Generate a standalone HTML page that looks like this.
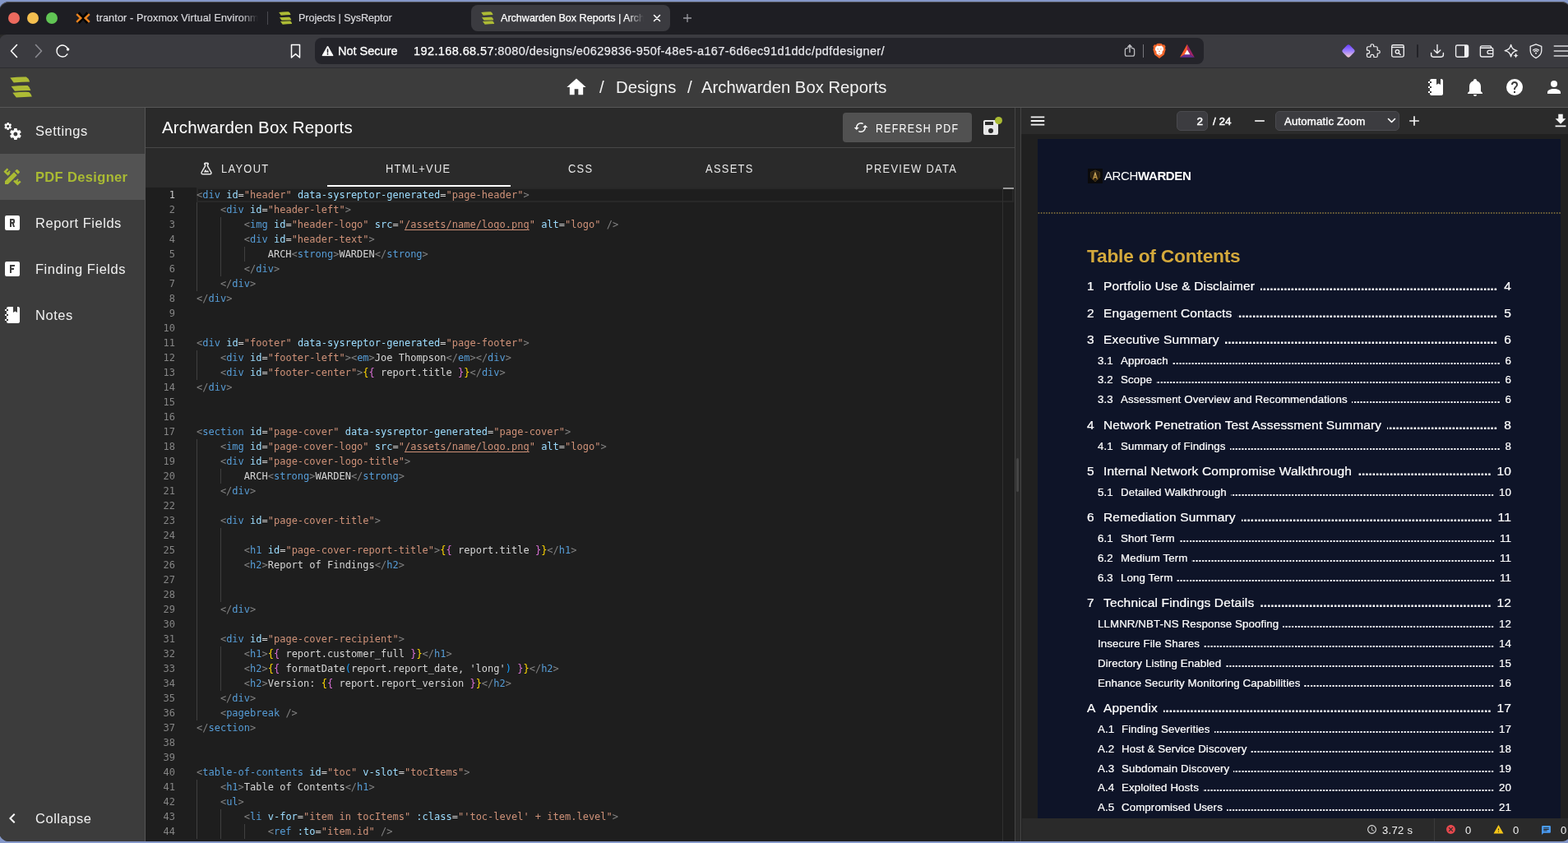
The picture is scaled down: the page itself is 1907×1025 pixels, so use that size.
<!DOCTYPE html>
<html lang="en"><head><meta charset="utf-8"><title>Archwarden Box Reports | SysReptor</title>
<style>
*{box-sizing:border-box;margin:0;padding:0}
html,body{width:1907px;height:1025px;overflow:hidden;background:#8497c8;font-family:"Liberation Sans",sans-serif;color:#fff}
.a{position:absolute}
#win{position:absolute;left:-1px;top:2px;width:1912px;height:1021px;border-radius:12px;overflow:hidden;background:#2a2a2a}
#hl{position:absolute;left:-1px;top:2px;width:1912px;height:1021px;border-radius:12px;box-shadow:inset 0 1px 0 rgba(255,255,255,.22);pointer-events:none}
#w{position:absolute;left:1px;top:-2px;width:1907px;height:1025px;will-change:transform}
.tx{position:absolute;white-space:nowrap}
.ui{font-family:"Liberation Sans",sans-serif}
.code{font-family:"DejaVu Sans Mono","Liberation Mono",monospace;font-size:12px}
.ln{position:absolute;left:177px;width:36px;text-align:right;height:18px;line-height:18px;color:#858585;font-family:"DejaVu Sans Mono","Liberation Mono",monospace;font-size:12px}
.ln.act{color:#c6c6c6}
.cl{position:absolute;height:18px;line-height:18px;white-space:pre;font-family:"DejaVu Sans Mono","Liberation Mono",monospace;font-size:12px;color:#d4d4d4}
.ig{position:absolute;width:1px;height:18px;background:#404040}
.d{color:#808080}.g{color:#569cd6}.n{color:#9cdcfe}.v{color:#ce9178}.t{color:#d4d4d4}.y{color:#ffd700}.m{color:#da70d6}.b{color:#179fff}
.v u{text-decoration:underline;text-underline-offset:2px}
.toc{position:absolute;display:flex;white-space:nowrap;color:#fff;overflow:hidden;-webkit-text-stroke:.22px #fff}
.toc .num{flex:none;display:inline-block}
.toc .tt{flex:none}
.toc .dots{flex:1 1 0;overflow:hidden;direction:rtl;text-align:right;min-width:0}
.toc .pg{flex:none;text-align:right}
.t1{font-size:15.5px;letter-spacing:.16px}
.t1 .dots{margin-left:7px;margin-right:7px;letter-spacing:-.05px;font-weight:bold}
.t1 .pg{min-width:10px}
.t2{font-size:13.3px;letter-spacing:.1px}
.t2 .dots{margin-left:5px;margin-right:6px;color:#f0f0f4;font-weight:bold}
.sb{position:absolute;left:43px;font-size:16.5px;letter-spacing:.52px;color:#f0f0f0;white-space:nowrap;height:56px;line-height:56px}
.tab{position:absolute;top:181px;height:48px;line-height:49px;font-size:14px;letter-spacing:1.42px;color:#e6e6e6;white-space:nowrap;transform-origin:0 50%;transform:scaleX(.92)}
</style></head>
<body>
<div id="win"><div id="w">
<!-- browser tab strip -->
<div class="a" style="left:0;top:0;width:1907px;height:42px;background:#1e1e23"></div>
<div class="a" style="left:10px;top:14.5px;width:14px;height:14px;border-radius:50%;background:#ec6a5e"></div>
<div class="a" style="left:33px;top:14.5px;width:14px;height:14px;border-radius:50%;background:#f4bf4f"></div>
<div class="a" style="left:56px;top:14.5px;width:14px;height:14px;border-radius:50%;background:#61c554"></div>
<svg class="a" style="left:91px;top:13px" width="20" height="18" viewBox="0 0 20 18"><path d="M4.6 2.6 L15.4 15 M15.4 2.6 L4.6 15" stroke="#000" stroke-width="3" fill="none"/><path d="M2.2 4.2 L7.3 9 L2.2 13.8 M17.8 4.2 L12.7 9 L17.8 13.8" stroke="#e8821e" stroke-width="2.5" fill="none" stroke-linejoin="miter"/></svg>
<div class="tx" style="left:117px;top:14px;letter-spacing:.14px;font-size:12.6px;color:#d8d8dc;-webkit-text-stroke:.2px #d8d8dc;line-height:16px;width:197px;overflow:hidden;-webkit-mask-image:linear-gradient(90deg,#000 89%,transparent 100%)">trantor - Proxmox Virtual Environment</div>
<div class="a" style="left:325px;top:14px;width:1px;height:16px;background:#4a4a50"></div>
<svg class="a" style="left:338.8px;top:14.4px" width="16.4" height="15.8" viewBox="11.5 93.4 27.2 25.8" preserveAspectRatio="none"><g fill="#adbb35"><path d="M11.8 95 Q22 93.6 31.4 93.9 Q34.6 95.6 35.7 99.9 Q26 100 16.2 101Z"/><path d="M13.1 105.3 Q23 104.2 33.2 104.4 Q36 106.2 36.9 110.5 Q27 110.3 17.5 111.15Z"/><path d="M14.8 113.2 Q25 112 34.6 112.3 Q37.4 113.8 38.4 117.8 Q29 118 19.3 119Z"/></g></svg>
<div class="tx" style="left:363px;top:14px;letter-spacing:-.05px;font-size:12.6px;color:#d8d8dc;-webkit-text-stroke:.2px #d8d8dc;line-height:16px">Projects | SysReptor</div>
<div class="a" style="left:573px;top:6px;width:242px;height:32px;border-radius:8px;background:#3b3b40"></div>
<svg class="a" style="left:584.8px;top:14.4px" width="16.4" height="15.8" viewBox="11.5 93.4 27.2 25.8" preserveAspectRatio="none"><g fill="#adbb35"><path d="M11.8 95 Q22 93.6 31.4 93.9 Q34.6 95.6 35.7 99.9 Q26 100 16.2 101Z"/><path d="M13.1 105.3 Q23 104.2 33.2 104.4 Q36 106.2 36.9 110.5 Q27 110.3 17.5 111.15Z"/><path d="M14.8 113.2 Q25 112 34.6 112.3 Q37.4 113.8 38.4 117.8 Q29 118 19.3 119Z"/></g></svg>
<div class="tx" style="left:609px;top:14px;letter-spacing:-.02px;font-size:12.6px;color:#fff;-webkit-text-stroke:.25px #fff;line-height:16px;width:174px;overflow:hidden;-webkit-mask-image:linear-gradient(90deg,#000 88%,transparent 100%)">Archwarden Box Reports | Archwarden</div>
<svg class="a" style="left:794px;top:17px" width="10" height="10" viewBox="0 0 10 10"><path d="M1.5 1.5 L8.5 8.5 M8.5 1.5 L1.5 8.5" stroke="#fff" stroke-width="1.5" stroke-linecap="round"/></svg>
<svg class="a" style="left:830px;top:16px" width="12" height="12" viewBox="0 0 12 12"><path d="M6 1 V11 M1 6 H11" stroke="#9a9aa0" stroke-width="1.3"/></svg>
<!-- toolbar -->
<div class="a" style="left:-1px;top:42px;width:1915px;height:41px;background:#3b3b40;border-radius:9px 9px 0 0"></div>
<div class="a" style="left:0;top:82px;width:1907px;height:1px;background:#2c2c30"></div>
<svg class="a" style="left:11px;top:53px" width="12" height="18" viewBox="0 0 12 18"><path d="M9.5 1.5 L2.5 9 L9.5 16.5" fill="none" stroke="#fff" stroke-width="1.6" stroke-linecap="round" stroke-linejoin="round"/></svg>
<svg class="a" style="left:41px;top:53px" width="12" height="18" viewBox="0 0 12 18"><path d="M2.5 1.5 L9.5 9 L2.5 16.5" fill="none" stroke="#8a8a90" stroke-width="1.6" stroke-linecap="round" stroke-linejoin="round"/></svg>
<svg class="a" style="left:66.4px;top:51.8px" width="20" height="20" viewBox="0 0 20 20"><path d="M15.87 13.81 A7 7 0 1 1 16.76 8.19" fill="none" stroke="#fff" stroke-width="1.4" stroke-linecap="round"/><circle cx="16.6" cy="8.1" r="1.75" fill="#fff"/></svg>
<svg class="a" style="left:352px;top:53px" width="15" height="19" viewBox="0 0 15 19"><path d="M2.5 1.5 H12.5 V17 L7.5 12.6 L2.5 17Z" fill="none" stroke="#fff" stroke-width="1.5" stroke-linejoin="round"/></svg>
<div class="a" style="left:383px;top:46px;width:1081px;height:32px;border-radius:8px;background:#24242a"></div>
<svg class="a" style="left:391px;top:55px" width="15" height="14" viewBox="0 0 15 14"><path d="M7.5 1 L14 12.6 H1Z" fill="#fff" stroke="#fff" stroke-width="1" stroke-linejoin="round"/><path d="M7.5 5 V8.6" stroke="#24242a" stroke-width="1.6" stroke-linecap="round"/><circle cx="7.5" cy="10.8" r=".95" fill="#24242a"/></svg>
<div class="tx" style="left:411px;top:53px;font-size:14.5px;color:#fff;-webkit-text-stroke:.3px #fff;line-height:18px">Not Secure</div>
<div class="tx" style="left:503px;top:53px;font-size:14.5px;color:#fff;-webkit-text-stroke:.25px #fff;line-height:18px;letter-spacing:.4px">192.168.68.57<span style="color:#e6e6ea;-webkit-text-stroke:.25px #e6e6ea">:8080/designs/e0629836-950f-48e5-a167-6d6ec91d1ddc/pdfdesigner/</span></div>
<!-- url right icons -->
<svg class="a" style="left:1366px;top:52px" width="16" height="19" viewBox="0 0 16 19"><path d="M5.6 6.6 H4.6 A2.2 2.2 0 0 0 2.4 8.8 V14 A2.2 2.2 0 0 0 4.6 16.2 H11.4 A2.2 2.2 0 0 0 13.6 14 V8.8 A2.2 2.2 0 0 0 11.4 6.6 H10.4" fill="none" stroke="#bcbcc0" stroke-width="1.3" stroke-linecap="round"/><path d="M8 11.6 V4" stroke="#bcbcc0" stroke-width="1.4" stroke-linecap="round"/><path d="M5.2 5.2 L8 2 L10.8 5.2Z" fill="#bcbcc0" stroke="#bcbcc0" stroke-width=".8" stroke-linejoin="round"/></svg>
<div class="a" style="left:1390px;top:54px;width:1px;height:16px;background:#77777c"></div>
<svg class="a" style="left:1401px;top:52px" width="18" height="20" viewBox="0 0 18 20"><path d="M9 0.8 L11.8 1 L13 2.4 L15 2.2 L16.6 4.6 L16 6.2 L16.6 8.2 L14.8 14.4 L9 19 L3.2 14.4 L1.4 8.2 L2 6.2 L1.4 4.6 L3 2.2 L5 2.4 L6.2 1Z" fill="#f1652b"/><path d="M9 4 L11.6 3.6 L13.8 5.8 L14.2 8.6 L12.4 11 L12.6 13 L9 15.6 L5.4 13 L5.6 11 L3.8 8.600000000000001 L4.2 5.8 L6.4 3.6Z" fill="#fff"/><path d="M6 7 L8 7.6 L7.4 8.6Z M12 7 L10 7.6 L10.6 8.6Z M8.2 10.8 L9 9.2 L9.8 10.8 L9 11.6Z M7.4 12.6 L9 13.4 L10.6 12.6 L9 14.4Z" fill="#f1652b"/></svg>
<svg class="a" style="left:1433px;top:52px" width="22" height="20" viewBox="0 0 22 20"><path d="M10.9 1.8 L2 17.8 L10.9 12.5Z" fill="#ff5a2c"/><path d="M10.9 1.8 L19.8 17.8 L10.9 12.5Z" fill="#a0246a"/><path d="M2 17.8 H19.8 L10.9 12.5Z" fill="#662d91"/><path d="M10.9 8.6 L14.3 14.3 H7.5Z" fill="#fff"/></svg>
<!-- toolbar right icons -->
<svg class="a" style="left:1630px;top:52px" width="20" height="20" viewBox="0 0 20 20"><defs><linearGradient id="gd" x1="0" y1="0" x2="1" y2="1"><stop offset="0" stop-color="#6236ff"/><stop offset=".5" stop-color="#9d80ff"/><stop offset="1" stop-color="#ffd6c4"/></linearGradient></defs><rect x="3.9" y="3.9" width="12.2" height="12.2" rx="2.8" fill="url(#gd)" transform="rotate(45 10 10)"/></svg>
<svg class="a" style="left:1660px;top:52px" width="20" height="20" viewBox="0 0 24 24"><path d="M20.5,11H19V7C19,5.89 18.1,5 17,5H13V3.5A2.5,2.5 0 0,0 10.5,1A2.5,2.5 0 0,0 8,3.5V5H4A2,2 0 0,0 2,7V10.8H3.5C5,10.8 6.2,12 6.2,13.5C6.2,15 5,16.2 3.5,16.2H2V20A2,2 0 0,0 4,22H7.8V20.5C7.8,19 9,17.8 10.5,17.8C12,17.8 13.2,19 13.2,20.5V22H17A2,2 0 0,0 19,20V16H20.5A2.5,2.5 0 0,0 23,13.5A2.5,2.5 0 0,0 20.5,11Z" fill="none" stroke="#f0f0f2" stroke-width="1.65" stroke-linejoin="round" transform="translate(1.2 1.2) scale(.9)"/></svg>
<svg class="a" style="left:1690px;top:53px" width="20" height="18" viewBox="0 0 20 18"><rect x="2.7" y="1.7" width="14.6" height="14.4" rx="1.8" fill="none" stroke="#f0f0f2" stroke-width="1.35"/><path d="M2.7 4.5 H17.3" stroke="#f0f0f2" stroke-width="1.3"/><circle cx="9.4" cy="9.8" r="2.2" fill="none" stroke="#f0f0f2" stroke-width="1.35"/><path d="M11.1 11.5 L13.2 13.5" stroke="#f0f0f2" stroke-width="1.4" stroke-linecap="round"/></svg>
<div class="a" style="left:1723px;top:54px;width:2px;height:16px;background:#222227;border-radius:1px"></div>
<svg class="a" style="left:1738px;top:52px" width="20" height="20" viewBox="0 0 20 20"><path d="M10 2.4 V12.6 M6.2 9 L10 12.8 L13.8 9 M2.6 12.4 V14.6 A2.6 2.6 0 0 0 5.2 17.2 H14.8 A2.6 2.6 0 0 0 17.4 14.6 V12.4" fill="none" stroke="#f0f0f2" stroke-width="1.4" stroke-linecap="round" stroke-linejoin="round"/></svg>
<svg class="a" style="left:1768px;top:53px" width="20" height="18" viewBox="0 0 20 18"><rect x="2.6" y="2" width="15" height="14.2" rx="1.8" fill="none" stroke="#f0f0f2" stroke-width="1.35"/><path d="M13 2 H15.8 A1.8 1.8 0 0 1 17.6 3.8 V14.4 A1.8 1.8 0 0 1 15.8 16.2 H13Z" fill="#f0f0f2"/></svg>
<svg class="a" style="left:1798px;top:53px" width="20" height="18" viewBox="0 0 20 18"><path d="M15.6 5.2 V4.4 A1.6 1.6 0 0 0 14 2.8 H4.4 A2 2 0 0 0 2.4 4.8 V14 A2 2 0 0 0 4.4 16 H16 A1.8 1.8 0 0 0 17.800000000000001 14.2 V7 A1.8 1.8 0 0 0 16 5.2 H3.6" fill="none" stroke="#f0f0f2" stroke-width="1.35" stroke-linejoin="round" stroke-linecap="round"/><path d="M17.8 8.4 H13 A2 2 0 0 0 13 12.4 H17.8" fill="none" stroke="#f0f0f2" stroke-width="1.35"/></svg>
<svg class="a" style="left:1828px;top:52px" width="22" height="20" viewBox="0 0 22 20"><path d="M9.6 2.4 Q10.6 8.4 17 9.6 Q10.6 10.8 9.6 16.8 Q8.6 10.8 2.2 9.6 Q8.6 8.4 9.6 2.4Z" fill="none" stroke="#f0f0f2" stroke-width="1.4" stroke-linejoin="round"/><path d="M15.6 12.6 Q16 15.2 18.6 15.6 Q16 16 15.6 18.6 Q15.2 16 12.6 15.6 Q15.2 15.2 15.6 12.6Z" fill="#f0f0f2"/></svg>
<svg class="a" style="left:1858px;top:52px" width="20" height="20" viewBox="0 0 20 20"><path d="M10 1.8 L16.8 4.3 V9.6 C16.8 14 13.8 16.8 10 18.6 C6.2 16.8 3.2 14 3.2 9.6 V4.3Z" fill="none" stroke="#f0f0f2" stroke-width="1.3" stroke-linejoin="round"/><path d="M6.6 9 A4.8 4.8 0 0 1 13.4 9 M7.9 10.7 A3 3 0 0 1 12.1 10.7" fill="none" stroke="#f0f0f2" stroke-width="1.2" stroke-linecap="round"/><circle cx="10" cy="12.7" r="1" fill="#f0f0f2"/></svg>
<svg class="a" style="left:1888px;top:54px" width="19" height="16" viewBox="0 0 19 16"><path d="M2.2 2 H19 M2.2 8 H19 M2.2 14 H19" stroke="#d8d8da" stroke-width="1.3" stroke-linecap="round"/></svg>

<!-- app bar -->
<div class="a" style="left:0;top:83px;width:1907px;height:47px;background:#3c3c3c"></div>
<div class="a" style="left:0;top:130px;width:1907px;height:1px;background:#575757"></div>
<svg class="a" style="left:11.5px;top:93.4px" width="27.2" height="25.8" viewBox="11.5 93.4 27.2 25.8" preserveAspectRatio="none"><g fill="#adbb35"><path d="M11.8 95 Q22 93.6 31.4 93.9 Q34.6 95.6 35.7 99.9 Q26 100 16.2 101Z"/><path d="M13.1 105.3 Q23 104.2 33.2 104.4 Q36 106.2 36.9 110.5 Q27 110.3 17.5 111.15Z"/><path d="M14.8 113.2 Q25 112 34.6 112.3 Q37.4 113.8 38.4 117.8 Q29 118 19.3 119Z"/></g></svg>
<svg class="a" style="left:687px;top:92px;" width="28" height="28" viewBox="0 0 24 24"><path fill="#fff" d="M10,20V14H14V20H19V12H22L12,3L2,12H5V20H10Z"/></svg>
<div class="tx" style="left:729px;top:93px;font-size:20.5px;line-height:26px;color:#f2f2f2;letter-spacing:.1px">/</div>
<div class="tx" style="left:749px;top:93px;font-size:20.3px;line-height:26px;color:#f2f2f2;letter-spacing:0">Designs</div>
<div class="tx" style="left:836px;top:93px;font-size:20.5px;line-height:26px;color:#f2f2f2">/</div>
<div class="tx" style="left:853px;top:93px;font-size:20.3px;line-height:26px;color:#f2f2f2;letter-spacing:0">Archwarden Box Reports</div>
<svg class="a" style="left:1734px;top:94px;" width="24" height="24" viewBox="0 0 24 24"><path fill="#fff" d="M3,7V5H5V4C5,2.89 5.9,2 7,2H13V9L15.5,7.5L18,9V2H19C20.05,2 21,2.95 21,4V20C21,21.05 20.05,22 19,22H7C5.95,22 5,21.05 5,20V19H3V17H5V13H3V11H5V7H3M7,11H5V13H7V11M7,7V5H5V7H7M7,19V17H5V19H7Z"/></svg>
<svg class="a" style="left:1782px;top:94px;" width="24" height="24" viewBox="0 0 24 24"><path fill="#fff" d="M21,19V20H3V19L5,17V11C5,7.9 7.03,5.17 10,4.29C10,4.19 10,4.1 10,4A2,2 0 0,1 12,2A2,2 0 0,1 14,4C14,4.1 14,4.19 14,4.29C16.97,5.17 19,7.9 19,11V17L21,19M14,21A2,2 0 0,1 12,23A2,2 0 0,1 10,21"/></svg>
<svg class="a" style="left:1830px;top:94px;" width="24" height="24" viewBox="0 0 24 24"><path fill="#fff" d="M15.07,11.25L14.17,12.17C13.45,12.89 13,13.5 13,15H11V14.5C11,13.39 11.45,12.39 12.17,11.67L13.41,10.41C13.78,10.05 14,9.55 14,9C14,7.89 13.1,7 12,7A2,2 0 0,0 10,9H8A4,4 0 0,1 12,5A4,4 0 0,1 16,9C16,9.88 15.64,10.67 15.07,11.25M13,19H11V17H13M12,2A10,10 0 0,0 2,12A10,10 0 0,0 12,22A10,10 0 0,0 22,12C22,6.47 17.5,2 12,2Z"/></svg>
<svg class="a" style="left:1878px;top:94px;" width="24" height="24" viewBox="0 0 24 24"><path fill="#fff" d="M12,4A4,4 0 0,1 16,8A4,4 0 0,1 12,12A4,4 0 0,1 8,8A4,4 0 0,1 12,4M12,14C16.42,14 20,15.79 20,18V20H4V18C4,15.79 7.58,14 12,14Z"/></svg>

<!-- sidebar -->
<div class="a" style="left:0;top:131px;width:176px;height:894px;background:#3c3c3c"></div>
<div class="a" style="left:176px;top:131px;width:1px;height:894px;background:#555"></div>
<div class="a" style="left:0;top:187px;width:176px;height:56px;background:#535353"></div>
<svg class="a" style="left:3px;top:147px;" width="24" height="24" viewBox="0 0 24 24"><path fill="#fff" d="M15.9,18.45C17.25,18.45 18.35,17.35 18.35,16C18.35,14.65 17.25,13.55 15.9,13.55C14.54,13.55 13.45,14.65 13.45,16C13.45,17.35 14.54,18.45 15.9,18.45M21.1,16.68L22.58,17.84C22.71,17.95 22.75,18.13 22.66,18.29L21.26,20.71C21.17,20.86 21,20.92 20.83,20.86L19.09,20.16C18.73,20.44 18.33,20.67 17.91,20.85L17.64,22.7C17.62,22.87 17.47,23 17.3,23H14.5C14.32,23 14.18,22.87 14.15,22.7L13.89,20.85C13.46,20.67 13.07,20.44 12.71,20.16L10.96,20.86C10.81,20.92 10.62,20.86 10.54,20.71L9.14,18.29C9.05,18.13 9.09,17.95 9.22,17.84L10.7,16.68L10.65,16L10.7,15.31L9.22,14.16C9.09,14.05 9.05,13.86 9.14,13.71L10.54,11.29C10.62,11.13 10.81,11.07 10.96,11.13L12.71,11.84C13.07,11.56 13.46,11.32 13.89,11.15L14.15,9.29C14.18,9.13 14.32,9 14.5,9H17.3C17.47,9 17.62,9.13 17.64,9.29L17.91,11.15C18.33,11.32 18.73,11.56 19.09,11.84L20.83,11.13C21,11.07 21.17,11.13 21.26,11.29L22.66,13.71C22.75,13.86 22.71,14.05 22.58,14.16L21.1,15.31L21.15,16L21.1,16.68M6.69,8.07C7.56,8.07 8.26,7.37 8.26,6.5C8.26,5.63 7.56,4.92 6.69,4.92A1.58,1.58 0 0,0 5.11,6.5C5.11,7.37 5.82,8.07 6.69,8.07M10.03,6.94L11,7.68C11.07,7.75 11.09,7.87 11.03,7.97L10.13,9.53C10.08,9.63 9.96,9.67 9.86,9.63L8.74,9.18L8,9.62L7.81,10.81C7.79,10.92 7.7,11 7.59,11H5.79C5.67,11 5.58,10.92 5.56,10.81L5.4,9.62L4.64,9.18L3.5,9.63C3.41,9.67 3.3,9.63 3.24,9.53L2.34,7.97C2.28,7.87 2.31,7.75 2.39,7.68L3.34,6.94L3.31,6.5L3.34,6.06L2.39,5.32C2.31,5.25 2.28,5.13 2.34,5.03L3.24,3.47C3.3,3.37 3.41,3.33 3.5,3.37L4.63,3.82L5.4,3.38L5.56,2.19C5.58,2.08 5.67,2 5.79,2H7.59C7.7,2 7.79,2.08 7.81,2.19L8,3.38L8.74,3.82L9.86,3.37C9.96,3.33 10.08,3.37 10.13,3.47L11.03,5.03C11.09,5.13 11.07,5.25 11,5.32L10.03,6.06L10.06,6.5L10.03,6.94Z"/></svg>
<div class="sb" style="top:131px">Settings</div>
<svg class="a" style="left:3px;top:203px;" width="24" height="24" viewBox="0 0 24 24"><path fill="#aabb33" d="M3 17.25V21H6.75L17.81 9.93L14.06 6.18L3 17.25M22.61 18.36L18.36 22.61L13.16 17.41L14.93 15.64L15.93 16.64L18.4 14.16L19.82 15.58L18.36 17L19.42 18L20.84 16.6L22.61 18.36M6.61 10.83L1.39 5.64L5.64 1.39L7.4 3.16L4.93 5.64L6 6.7L8.46 4.22L9.88 5.64L8.46 7.05L9.46 8.05L6.61 10.83M20.71 7C21.1 6.61 21.1 6 20.71 5.59L18.37 3.29C18 2.9 17.35 2.9 16.96 3.29L15.12 5.12L18.87 8.87L20.71 7Z"/></svg>
<div class="sb" style="top:187px;color:#aabb33;font-weight:bold;letter-spacing:.35px">PDF Designer</div>
<svg class="a" style="left:3px;top:259px;" width="24" height="24" viewBox="0 0 24 24"><path fill="#fff" d="M5,3H19A2,2 0 0,1 21,5V19A2,2 0 0,1 19,21H5A2,2 0 0,1 3,19V5A2,2 0 0,1 5,3M9,7V17H11V13H11.8L13,17H15L13.76,12.85C14.5,12.55 15,11.84 15,11V9A2,2 0 0,0 13,7H9M11,9H13V11H11V9Z"/></svg>
<div class="sb" style="top:243px">Report Fields</div>
<svg class="a" style="left:3px;top:315px;" width="24" height="24" viewBox="0 0 24 24"><path fill="#fff" d="M9,7V17H11V13H14V11H11V9H15V7H9M5,3H19A2,2 0 0,1 21,5V19A2,2 0 0,1 19,21H5A2,2 0 0,1 3,19V5A2,2 0 0,1 5,3Z"/></svg>
<div class="sb" style="top:299px">Finding Fields</div>
<svg class="a" style="left:3px;top:371px;" width="24" height="24" viewBox="0 0 24 24"><path fill="#fff" d="M3,7V5H5V4C5,2.89 5.9,2 7,2H13V9L15.5,7.5L18,9V2H19C20.05,2 21,2.95 21,4V20C21,21.05 20.05,22 19,22H7C5.95,22 5,21.05 5,20V19H3V17H5V13H3V11H5V7H3M7,11H5V13H7V11M7,7V5H5V7H7M7,19V17H5V19H7Z"/></svg>
<div class="sb" style="top:355px">Notes</div>
<svg class="a" style="left:3px;top:983px;" width="24" height="24" viewBox="0 0 24 24"><path fill="#fff" d="M15.41,16.58L10.83,12L15.41,7.41L14,6L8,12L14,18L15.41,16.58Z"/></svg>
<div class="sb" style="top:967px">Collapse</div>

<!-- main header -->
<div class="a" style="left:177px;top:131px;width:1057px;height:97px;background:#2a2a2a"></div>
<div class="a" style="left:177px;top:179px;width:1057px;height:1px;background:#474747"></div>
<div class="tx" style="left:197px;top:141px;font-size:20.5px;line-height:28px;color:#fff;letter-spacing:.18px">Archwarden Box Reports</div>
<div class="a" style="left:1025px;top:137px;width:157px;height:36px;border-radius:4px;background:#515151"></div>
<svg class="a" style="left:1037.5px;top:146px;" width="18" height="18" viewBox="0 0 24 24"><path fill="#fff" d="M19,8L15,12H18A6,6 0 0,1 12,18C11,18 10.03,17.75 9.2,17.3L7.74,18.76C8.97,19.54 10.43,20 12,20A8,8 0 0,0 20,12H23M6,12A6,6 0 0,1 12,6C13,6 13.97,6.25 14.8,6.7L16.26,5.24C15.03,4.46 13.57,4 12,4A8,8 0 0,0 4,12H1L5,16L9,12"/></svg>
<div class="tx" style="left:1065px;top:147px;font-size:14px;line-height:18px;letter-spacing:1.42px;color:#fff;transform-origin:0 50%;transform:scaleX(.885)">REFRESH PDF</div>
<svg class="a" style="left:1193px;top:143px;" width="24" height="24" viewBox="0 0 24 24"><path fill="#e8e8e8" d="M15,9H5V5H15M12,19A3,3 0 0,1 9,16A3,3 0 0,1 12,13A3,3 0 0,1 15,16A3,3 0 0,1 12,19M17,3H5C3.89,3 3,3.9 3,5V19A2,2 0 0,0 5,21H19A2,2 0 0,0 21,19V7L17,3Z"/></svg>
<div class="a" style="left:1210px;top:142px;width:9px;height:9px;border-radius:50%;background:#aabb33"></div>
<!-- tabs -->
<svg class="a" style="left:242px;top:196px;" width="18" height="18" viewBox="0 0 24 24"><path fill="#e6e6e6" d="M5,19A1,1 0 0,0 6,20H18A1,1 0 0,0 19,19C19,18.79 18.93,18.59 18.82,18.43L13,8.35V4H11V8.35L5.18,18.43C5.07,18.59 5,18.79 5,19M6,22A3,3 0 0,1 3,19C3,18.4 3.18,17.84 3.5,17.37L9,7.81V6A1,1 0 0,1 8,5V4A2,2 0 0,1 10,2H14A2,2 0 0,1 16,4V5A1,1 0 0,1 15,6V7.81L20.5,17.37C20.82,17.84 21,18.4 21,19A3,3 0 0,1 18,22H6M13,16L14.34,14.66L16.27,18H7.73L10.39,13.39L13,16M12.5,12A0.5,0.5 0 0,1 13,12.5A0.5,0.5 0 0,1 12.5,13A0.5,0.5 0 0,1 12,12.5A0.5,0.5 0 0,1 12.5,12Z"/></svg>
<div class="tab" style="left:269px">LAYOUT</div>
<div class="tab" style="left:469px">HTML+VUE</div>
<div class="tab" style="left:691px">CSS</div>
<div class="tab" style="left:858px">ASSETS</div>
<div class="tab" style="left:1053px">PREVIEW DATA</div>
<div class="a" style="left:398px;top:225px;width:223px;height:2px;background:#fff"></div>

<!-- code editor -->
<div class="a" style="left:177px;top:228px;width:1057px;height:797px;background:#1e1e1e"></div>
<div class="a" style="left:239px;top:228px;width:994px;height:18px;border:2px solid #282828"></div>
<div class="a" style="left:1219px;top:228px;width:1px;height:797px;background:#303030"></div>
<div class="a" style="left:1220px;top:228px;width:13px;height:2px;background:#999"></div>
<div class="ln act" style="top:228px">1</div><div class="cl" style="top:228px;left:239.00px"><span class="d">&lt;</span><span class="g">div</span> <span class="n">id</span><span class="t">=</span><span class="v">"header"</span> <span class="n">data-sysreptor-generated</span><span class="t">=</span><span class="v">"page-header"</span><span class="d">&gt;</span></div><div class="ln" style="top:246px">2</div><div class="ig" style="left:239.0px;top:246px"></div><div class="cl" style="top:246px;left:267.90px"><span class="d">&lt;</span><span class="g">div</span> <span class="n">id</span><span class="t">=</span><span class="v">"header-left"</span><span class="d">&gt;</span></div><div class="ln" style="top:264px">3</div><div class="ig" style="left:239.0px;top:264px"></div><div class="ig" style="left:267.9px;top:264px"></div><div class="cl" style="top:264px;left:296.80px"><span class="d">&lt;</span><span class="g">img</span> <span class="n">id</span><span class="t">=</span><span class="v">"header-logo"</span> <span class="n">src</span><span class="t">=</span><span class="v">"<u>/assets/name/logo.png</u>"</span> <span class="n">alt</span><span class="t">=</span><span class="v">"logo"</span> <span class="d">/&gt;</span></div><div class="ln" style="top:282px">4</div><div class="ig" style="left:239.0px;top:282px"></div><div class="ig" style="left:267.9px;top:282px"></div><div class="cl" style="top:282px;left:296.80px"><span class="d">&lt;</span><span class="g">div</span> <span class="n">id</span><span class="t">=</span><span class="v">"header-text"</span><span class="d">&gt;</span></div><div class="ln" style="top:300px">5</div><div class="ig" style="left:239.0px;top:300px"></div><div class="ig" style="left:267.9px;top:300px"></div><div class="ig" style="left:296.8px;top:300px"></div><div class="cl" style="top:300px;left:325.70px"><span class="t">ARCH</span><span class="d">&lt;</span><span class="g">strong</span><span class="d">&gt;</span><span class="t">WARDEN</span><span class="d">&lt;/</span><span class="g">strong</span><span class="d">&gt;</span></div><div class="ln" style="top:318px">6</div><div class="ig" style="left:239.0px;top:318px"></div><div class="ig" style="left:267.9px;top:318px"></div><div class="cl" style="top:318px;left:296.80px"><span class="d">&lt;/</span><span class="g">div</span><span class="d">&gt;</span></div><div class="ln" style="top:336px">7</div><div class="ig" style="left:239.0px;top:336px"></div><div class="cl" style="top:336px;left:267.90px"><span class="d">&lt;/</span><span class="g">div</span><span class="d">&gt;</span></div><div class="ln" style="top:354px">8</div><div class="cl" style="top:354px;left:239.00px"><span class="d">&lt;/</span><span class="g">div</span><span class="d">&gt;</span></div><div class="ln" style="top:372px">9</div><div class="ln" style="top:390px">10</div><div class="ln" style="top:408px">11</div><div class="cl" style="top:408px;left:239.00px"><span class="d">&lt;</span><span class="g">div</span> <span class="n">id</span><span class="t">=</span><span class="v">"footer"</span> <span class="n">data-sysreptor-generated</span><span class="t">=</span><span class="v">"page-footer"</span><span class="d">&gt;</span></div><div class="ln" style="top:426px">12</div><div class="ig" style="left:239.0px;top:426px"></div><div class="cl" style="top:426px;left:267.90px"><span class="d">&lt;</span><span class="g">div</span> <span class="n">id</span><span class="t">=</span><span class="v">"footer-left"</span><span class="d">&gt;</span><span class="d">&lt;</span><span class="g">em</span><span class="d">&gt;</span><span class="t">Joe Thompson</span><span class="d">&lt;/</span><span class="g">em</span><span class="d">&gt;</span><span class="d">&lt;/</span><span class="g">div</span><span class="d">&gt;</span></div><div class="ln" style="top:444px">13</div><div class="ig" style="left:239.0px;top:444px"></div><div class="cl" style="top:444px;left:267.90px"><span class="d">&lt;</span><span class="g">div</span> <span class="n">id</span><span class="t">=</span><span class="v">"footer-center"</span><span class="d">&gt;</span><span class="y">{</span><span class="m">{</span><span class="t"> report.title </span><span class="m">}</span><span class="y">}</span><span class="d">&lt;/</span><span class="g">div</span><span class="d">&gt;</span></div><div class="ln" style="top:462px">14</div><div class="cl" style="top:462px;left:239.00px"><span class="d">&lt;/</span><span class="g">div</span><span class="d">&gt;</span></div><div class="ln" style="top:480px">15</div><div class="ln" style="top:498px">16</div><div class="ln" style="top:516px">17</div><div class="cl" style="top:516px;left:239.00px"><span class="d">&lt;</span><span class="g">section</span> <span class="n">id</span><span class="t">=</span><span class="v">"page-cover"</span> <span class="n">data-sysreptor-generated</span><span class="t">=</span><span class="v">"page-cover"</span><span class="d">&gt;</span></div><div class="ln" style="top:534px">18</div><div class="ig" style="left:239.0px;top:534px"></div><div class="cl" style="top:534px;left:267.90px"><span class="d">&lt;</span><span class="g">img</span> <span class="n">id</span><span class="t">=</span><span class="v">"page-cover-logo"</span> <span class="n">src</span><span class="t">=</span><span class="v">"<u>/assets/name/logo.png</u>"</span> <span class="n">alt</span><span class="t">=</span><span class="v">"logo"</span><span class="d">&gt;</span></div><div class="ln" style="top:552px">19</div><div class="ig" style="left:239.0px;top:552px"></div><div class="cl" style="top:552px;left:267.90px"><span class="d">&lt;</span><span class="g">div</span> <span class="n">id</span><span class="t">=</span><span class="v">"page-cover-logo-title"</span><span class="d">&gt;</span></div><div class="ln" style="top:570px">20</div><div class="ig" style="left:239.0px;top:570px"></div><div class="ig" style="left:267.9px;top:570px"></div><div class="cl" style="top:570px;left:296.80px"><span class="t">ARCH</span><span class="d">&lt;</span><span class="g">strong</span><span class="d">&gt;</span><span class="t">WARDEN</span><span class="d">&lt;/</span><span class="g">strong</span><span class="d">&gt;</span></div><div class="ln" style="top:588px">21</div><div class="ig" style="left:239.0px;top:588px"></div><div class="cl" style="top:588px;left:267.90px"><span class="d">&lt;/</span><span class="g">div</span><span class="d">&gt;</span></div><div class="ln" style="top:606px">22</div><div class="ig" style="left:239.0px;top:606px"></div><div class="ln" style="top:624px">23</div><div class="ig" style="left:239.0px;top:624px"></div><div class="cl" style="top:624px;left:267.90px"><span class="d">&lt;</span><span class="g">div</span> <span class="n">id</span><span class="t">=</span><span class="v">"page-cover-title"</span><span class="d">&gt;</span></div><div class="ln" style="top:642px">24</div><div class="ig" style="left:239.0px;top:642px"></div><div class="ig" style="left:267.9px;top:642px"></div><div class="ln" style="top:660px">25</div><div class="ig" style="left:239.0px;top:660px"></div><div class="ig" style="left:267.9px;top:660px"></div><div class="cl" style="top:660px;left:296.80px"><span class="d">&lt;</span><span class="g">h1</span> <span class="n">id</span><span class="t">=</span><span class="v">"page-cover-report-title"</span><span class="d">&gt;</span><span class="y">{</span><span class="m">{</span><span class="t"> report.title </span><span class="m">}</span><span class="y">}</span><span class="d">&lt;/</span><span class="g">h1</span><span class="d">&gt;</span></div><div class="ln" style="top:678px">26</div><div class="ig" style="left:239.0px;top:678px"></div><div class="ig" style="left:267.9px;top:678px"></div><div class="cl" style="top:678px;left:296.80px"><span class="d">&lt;</span><span class="g">h2</span><span class="d">&gt;</span><span class="t">Report of Findings</span><span class="d">&lt;/</span><span class="g">h2</span><span class="d">&gt;</span></div><div class="ln" style="top:696px">27</div><div class="ig" style="left:239.0px;top:696px"></div><div class="ig" style="left:267.9px;top:696px"></div><div class="ln" style="top:714px">28</div><div class="ig" style="left:239.0px;top:714px"></div><div class="ig" style="left:267.9px;top:714px"></div><div class="ln" style="top:732px">29</div><div class="ig" style="left:239.0px;top:732px"></div><div class="cl" style="top:732px;left:267.90px"><span class="d">&lt;/</span><span class="g">div</span><span class="d">&gt;</span></div><div class="ln" style="top:750px">30</div><div class="ig" style="left:239.0px;top:750px"></div><div class="ln" style="top:768px">31</div><div class="ig" style="left:239.0px;top:768px"></div><div class="cl" style="top:768px;left:267.90px"><span class="d">&lt;</span><span class="g">div</span> <span class="n">id</span><span class="t">=</span><span class="v">"page-cover-recipient"</span><span class="d">&gt;</span></div><div class="ln" style="top:786px">32</div><div class="ig" style="left:239.0px;top:786px"></div><div class="ig" style="left:267.9px;top:786px"></div><div class="cl" style="top:786px;left:296.80px"><span class="d">&lt;</span><span class="g">h1</span><span class="d">&gt;</span><span class="y">{</span><span class="m">{</span><span class="t"> report.customer_full </span><span class="m">}</span><span class="y">}</span><span class="d">&lt;/</span><span class="g">h1</span><span class="d">&gt;</span></div><div class="ln" style="top:804px">33</div><div class="ig" style="left:239.0px;top:804px"></div><div class="ig" style="left:267.9px;top:804px"></div><div class="cl" style="top:804px;left:296.80px"><span class="d">&lt;</span><span class="g">h2</span><span class="d">&gt;</span><span class="y">{</span><span class="m">{</span><span class="t"> formatDate</span><span class="b">(</span><span class="t">report.report_date, 'long'</span><span class="b">)</span><span class="t"> </span><span class="m">}</span><span class="y">}</span><span class="d">&lt;/</span><span class="g">h2</span><span class="d">&gt;</span></div><div class="ln" style="top:822px">34</div><div class="ig" style="left:239.0px;top:822px"></div><div class="ig" style="left:267.9px;top:822px"></div><div class="cl" style="top:822px;left:296.80px"><span class="d">&lt;</span><span class="g">h2</span><span class="d">&gt;</span><span class="t">Version: </span><span class="y">{</span><span class="m">{</span><span class="t"> report.report_version </span><span class="m">}</span><span class="y">}</span><span class="d">&lt;/</span><span class="g">h2</span><span class="d">&gt;</span></div><div class="ln" style="top:840px">35</div><div class="ig" style="left:239.0px;top:840px"></div><div class="cl" style="top:840px;left:267.90px"><span class="d">&lt;/</span><span class="g">div</span><span class="d">&gt;</span></div><div class="ln" style="top:858px">36</div><div class="ig" style="left:239.0px;top:858px"></div><div class="cl" style="top:858px;left:267.90px"><span class="d">&lt;</span><span class="g">pagebreak</span> <span class="d">/&gt;</span></div><div class="ln" style="top:876px">37</div><div class="cl" style="top:876px;left:239.00px"><span class="d">&lt;/</span><span class="g">section</span><span class="d">&gt;</span></div><div class="ln" style="top:894px">38</div><div class="ln" style="top:912px">39</div><div class="ln" style="top:930px">40</div><div class="cl" style="top:930px;left:239.00px"><span class="d">&lt;</span><span class="g">table-of-contents</span> <span class="n">id</span><span class="t">=</span><span class="v">"toc"</span> <span class="n">v-slot</span><span class="t">=</span><span class="v">"tocItems"</span><span class="d">&gt;</span></div><div class="ln" style="top:948px">41</div><div class="ig" style="left:239.0px;top:948px"></div><div class="cl" style="top:948px;left:267.90px"><span class="d">&lt;</span><span class="g">h1</span><span class="d">&gt;</span><span class="t">Table of Contents</span><span class="d">&lt;/</span><span class="g">h1</span><span class="d">&gt;</span></div><div class="ln" style="top:966px">42</div><div class="ig" style="left:239.0px;top:966px"></div><div class="cl" style="top:966px;left:267.90px"><span class="d">&lt;</span><span class="g">ul</span><span class="d">&gt;</span></div><div class="ln" style="top:984px">43</div><div class="ig" style="left:239.0px;top:984px"></div><div class="ig" style="left:267.9px;top:984px"></div><div class="cl" style="top:984px;left:296.80px"><span class="d">&lt;</span><span class="g">li</span> <span class="n">v-for</span><span class="t">=</span><span class="v">"item in tocItems"</span> <span class="n">:class</span><span class="t">=</span><span class="v">"'toc-level' + item.level"</span><span class="d">&gt;</span></div><div class="ln" style="top:1002px">44</div><div class="ig" style="left:239.0px;top:1002px"></div><div class="ig" style="left:267.9px;top:1002px"></div><div class="ig" style="left:296.8px;top:1002px"></div><div class="cl" style="top:1002px;left:325.70px"><span class="d">&lt;</span><span class="g">ref</span> <span class="n">:to</span><span class="t">=</span><span class="v">"item.id"</span> <span class="d">/&gt;</span></div>

<!-- splitter -->
<div class="a" style="left:1234px;top:131px;width:9px;height:894px;background:#2a2a2a"></div>
<div class="a" style="left:1234px;top:131px;width:1px;height:894px;background:#454545"></div>
<div class="a" style="left:1241px;top:131px;width:1px;height:894px;background:#454545"></div>
<div class="a" style="left:1236.3px;top:557px;width:3.2px;height:40.5px;background:#454545;border-radius:1.6px"></div>

<!-- pdf viewer -->
<div class="a" style="left:1242px;top:131px;width:665px;height:894px;background:#202020"></div>
<div class="a" style="left:1242px;top:131px;width:665px;height:32px;background:#2b2b2b"></div>
<svg class="a" style="left:1251px;top:136px;" width="22" height="22" viewBox="0 0 24 24"><path fill="#f4f4f4" d="M3,6H21V8H3V6M3,11H21V13H3V11M3,16H21V18H3V16Z"/></svg>
<div class="a" style="left:1431px;top:135px;width:38px;height:24px;border-radius:5px;background:#3c3c40;border:1px solid #4a4a4e"></div>
<div class="tx" style="left:1431px;top:140px;width:32px;text-align:right;font-size:13.5px;line-height:16px;color:#fff;-webkit-text-stroke:.45px #fff">2</div>
<div class="tx" style="left:1475px;top:140px;font-size:13.5px;line-height:16px;color:#fff;-webkit-text-stroke:.45px #fff">/ 24</div>
<svg class="a" style="left:1522px;top:137px;" width="20" height="20" viewBox="0 0 24 24"><path fill="#f4f4f4" d="M19,13H5V11H19V13Z"/></svg>
<div class="a" style="left:1551px;top:135px;width:151px;height:24px;border-radius:5px;background:#3c3c40;border:1px solid #4a4a4e"></div>
<div class="tx" style="left:1562px;top:140px;font-size:13.3px;line-height:16px;color:#fff;letter-spacing:.12px;-webkit-text-stroke:.35px #fff">Automatic Zoom</div>
<svg class="a" style="left:1687px;top:143px" width="11" height="8" viewBox="0 0 11 8"><path d="M1.5 1.5 L5.5 5.5 L9.5 1.5" fill="none" stroke="#fff" stroke-width="1.6" stroke-linecap="round" stroke-linejoin="round"/></svg>
<svg class="a" style="left:1709.5px;top:137px;" width="20" height="20" viewBox="0 0 24 24"><path fill="#f4f4f4" d="M19,13H13V19H11V13H5V11H11V5H13V11H19V13Z"/></svg>
<svg class="a" style="left:1887px;top:136px;" width="22" height="22" viewBox="0 0 24 24"><path fill="#f4f4f4" d="M5,20H19V18H5M19,9H15V3H9V9H5L12,16L19,9Z"/></svg>
<!-- page -->
<div class="a" style="left:1262px;top:169px;width:636px;height:826px;background:#0e1428"></div>

<div class="a" style="left:1323px;top:205px;width:17.7px;height:17.7px;background:#0a0a0c"></div>
<svg class="a" style="left:1323px;top:205px" width="18" height="18" viewBox="0 0 18 18"><defs><linearGradient id="gl" x1="0" y1="0" x2="0" y2="1"><stop offset="0" stop-color="#e8c878"/><stop offset="1" stop-color="#8a6424"/></linearGradient></defs><path d="M9 2 L14.6 4.4 V10.6 L9 16 L3.4 10.6 V4.4Z" fill="#2a2010" stroke="#4a3a18" stroke-width=".8"/><path d="M5.6 13.2 L9 3.6 L12.4 13.2 L10.6 13.2 L9 8 L7.4 13.2Z" fill="url(#gl)"/><path d="M7 10 H11 V11.2 H7Z" fill="#c9a24a"/></svg>
<div class="tx" style="left:1343px;top:204px;font-size:15px;line-height:19px;color:#fff;letter-spacing:-.38px">ARCH<b>WARDEN</b></div>
<svg class="a" style="left:1262px;top:257px" width="636" height="4" viewBox="0 0 636 4"><line x1="0.6" y1="2" x2="636" y2="2" stroke="#6f6138" stroke-width="1.8" stroke-dasharray="1.6 1.6"/></svg>
<div class="tx" style="left:1322px;top:296px;font-size:22.7px;line-height:30px;font-weight:bold;color:#d4a93c;letter-spacing:-.2px">Table of Contents</div>
<div class="toc t1" style="top:337px;left:1322px;width:516px;height:22px;line-height:22px"><span class="num" style="width:20px">1</span><span class="tt">Portfolio Use &amp; Disclaimer</span><span class="dots">............................................................................................................................................................................................................................................................................................................</span><span class="pg">4</span></div>
<div class="toc t1" style="top:370px;left:1322px;width:516px;height:22px;line-height:22px"><span class="num" style="width:20px">2</span><span class="tt">Engagement Contacts</span><span class="dots">............................................................................................................................................................................................................................................................................................................</span><span class="pg">5</span></div>
<div class="toc t1" style="top:402px;left:1322px;width:516px;height:22px;line-height:22px"><span class="num" style="width:20px">3</span><span class="tt">Executive Summary</span><span class="dots">............................................................................................................................................................................................................................................................................................................</span><span class="pg">6</span></div>
<div class="toc t2" style="top:430px;left:1335px;width:503px;height:18px;line-height:18px"><span class="num" style="width:28px">3.1</span><span class="tt">Approach</span><span class="dots">............................................................................................................................................................................................................................................................................................................</span><span class="pg">6</span></div>
<div class="toc t2" style="top:453px;left:1335px;width:503px;height:18px;line-height:18px"><span class="num" style="width:28px">3.2</span><span class="tt">Scope</span><span class="dots">............................................................................................................................................................................................................................................................................................................</span><span class="pg">6</span></div>
<div class="toc t2" style="top:477px;left:1335px;width:503px;height:18px;line-height:18px"><span class="num" style="width:28px">3.3</span><span class="tt">Assessment Overview and Recommendations</span><span class="dots">............................................................................................................................................................................................................................................................................................................</span><span class="pg">6</span></div>
<div class="toc t1" style="top:506px;left:1322px;width:516px;height:22px;line-height:22px"><span class="num" style="width:20px">4</span><span class="tt">Network Penetration Test Assessment Summary</span><span class="dots">............................................................................................................................................................................................................................................................................................................</span><span class="pg">8</span></div>
<div class="toc t2" style="top:534px;left:1335px;width:503px;height:18px;line-height:18px"><span class="num" style="width:28px">4.1</span><span class="tt">Summary of Findings</span><span class="dots">............................................................................................................................................................................................................................................................................................................</span><span class="pg">8</span></div>
<div class="toc t1" style="top:562px;left:1322px;width:516px;height:22px;line-height:22px"><span class="num" style="width:20px">5</span><span class="tt">Internal Network Compromise Walkthrough</span><span class="dots">............................................................................................................................................................................................................................................................................................................</span><span class="pg">10</span></div>
<div class="toc t2" style="top:590px;left:1335px;width:503px;height:18px;line-height:18px"><span class="num" style="width:28px">5.1</span><span class="tt">Detailed Walkthrough</span><span class="dots">............................................................................................................................................................................................................................................................................................................</span><span class="pg">10</span></div>
<div class="toc t1" style="top:618px;left:1322px;width:516px;height:22px;line-height:22px"><span class="num" style="width:20px">6</span><span class="tt">Remediation Summary</span><span class="dots">............................................................................................................................................................................................................................................................................................................</span><span class="pg">11</span></div>
<div class="toc t2" style="top:646px;left:1335px;width:503px;height:18px;line-height:18px"><span class="num" style="width:28px">6.1</span><span class="tt">Short Term</span><span class="dots">............................................................................................................................................................................................................................................................................................................</span><span class="pg">11</span></div>
<div class="toc t2" style="top:670px;left:1335px;width:503px;height:18px;line-height:18px"><span class="num" style="width:28px">6.2</span><span class="tt">Medium Term</span><span class="dots">............................................................................................................................................................................................................................................................................................................</span><span class="pg">11</span></div>
<div class="toc t2" style="top:694px;left:1335px;width:503px;height:18px;line-height:18px"><span class="num" style="width:28px">6.3</span><span class="tt">Long Term</span><span class="dots">............................................................................................................................................................................................................................................................................................................</span><span class="pg">11</span></div>
<div class="toc t1" style="top:722px;left:1322px;width:516px;height:22px;line-height:22px"><span class="num" style="width:20px">7</span><span class="tt">Technical Findings Details</span><span class="dots">............................................................................................................................................................................................................................................................................................................</span><span class="pg">12</span></div>
<div class="toc t2" style="top:750px;left:1335px;width:503px;height:18px;line-height:18px"><span class="tt">LLMNR/NBT-NS Response Spoofing</span><span class="dots">............................................................................................................................................................................................................................................................................................................</span><span class="pg">12</span></div>
<div class="toc t2" style="top:774px;left:1335px;width:503px;height:18px;line-height:18px"><span class="tt">Insecure File Shares</span><span class="dots">............................................................................................................................................................................................................................................................................................................</span><span class="pg">14</span></div>
<div class="toc t2" style="top:798px;left:1335px;width:503px;height:18px;line-height:18px"><span class="tt">Directory Listing Enabled</span><span class="dots">............................................................................................................................................................................................................................................................................................................</span><span class="pg">15</span></div>
<div class="toc t2" style="top:822px;left:1335px;width:503px;height:18px;line-height:18px"><span class="tt">Enhance Security Monitoring Capabilities</span><span class="dots">............................................................................................................................................................................................................................................................................................................</span><span class="pg">16</span></div>
<div class="toc t1" style="top:850px;left:1322px;width:516px;height:22px;line-height:22px"><span class="num" style="width:20px">A</span><span class="tt">Appendix</span><span class="dots">............................................................................................................................................................................................................................................................................................................</span><span class="pg">17</span></div>
<div class="toc t2" style="top:878px;left:1335px;width:503px;height:18px;line-height:18px"><span class="num" style="width:29px">A.1</span><span class="tt">Finding Severities</span><span class="dots">............................................................................................................................................................................................................................................................................................................</span><span class="pg">17</span></div>
<div class="toc t2" style="top:902px;left:1335px;width:503px;height:18px;line-height:18px"><span class="num" style="width:29px">A.2</span><span class="tt">Host &amp; Service Discovery</span><span class="dots">............................................................................................................................................................................................................................................................................................................</span><span class="pg">18</span></div>
<div class="toc t2" style="top:926px;left:1335px;width:503px;height:18px;line-height:18px"><span class="num" style="width:29px">A.3</span><span class="tt">Subdomain Discovery</span><span class="dots">............................................................................................................................................................................................................................................................................................................</span><span class="pg">19</span></div>
<div class="toc t2" style="top:949px;left:1335px;width:503px;height:18px;line-height:18px"><span class="num" style="width:29px">A.4</span><span class="tt">Exploited Hosts</span><span class="dots">............................................................................................................................................................................................................................................................................................................</span><span class="pg">20</span></div>
<div class="toc t2" style="top:973px;left:1335px;width:503px;height:18px;line-height:18px"><span class="num" style="width:29px">A.5</span><span class="tt">Compromised Users</span><span class="dots">............................................................................................................................................................................................................................................................................................................</span><span class="pg">21</span></div>

<!-- status bar -->
<div class="a" style="left:1243px;top:995px;width:664px;height:30px;background:#2a2a2a"></div>
<div class="a" style="left:1744px;top:995px;width:1px;height:30px;background:#3c3c3c"></div>
<svg class="a" style="left:1661.5px;top:1002px;" width="13" height="13" viewBox="0 0 24 24"><path fill="#ddd" d="M12,20A8,8 0 0,0 20,12A8,8 0 0,0 12,4A8,8 0 0,0 4,12A8,8 0 0,0 12,20M12,2A10,10 0 0,1 22,12A10,10 0 0,1 12,22C6.47,22 2,17.5 2,12A10,10 0 0,1 12,2M12.5,7V12.25L17,14.92L16.25,16.15L11,13V7H12.5Z"/></svg>
<div class="tx" style="left:1681px;top:1002px;font-size:13px;line-height:16px;color:#f0f0f0;letter-spacing:.3px">3.72 s</div>
<svg class="a" style="left:1757.5px;top:1002px;" width="13" height="13" viewBox="0 0 24 24"><path fill="#e5484d" d="M12,2C17.53,2 22,6.47 22,12C22,17.53 17.53,22 12,22C6.47,22 2,17.53 2,12C2,6.47 6.47,2 12,2M15.59,7L12,10.59L8.41,7L7,8.41L10.59,12L7,15.59L8.41,17L12,13.41L15.59,17L17,15.59L13.41,12L17,8.41L15.59,7Z"/></svg>
<div class="tx" style="left:1782px;top:1002px;font-size:13px;line-height:16px;color:#f0f0f0">0</div>
<svg class="a" style="left:1815.5px;top:1002px;" width="13" height="13" viewBox="0 0 24 24"><path fill="#f5c518" d="M13,14H11V10H13M13,18H11V16H13M1,21H23L12,2L1,21Z"/></svg>
<div class="tx" style="left:1840px;top:1002px;font-size:13px;line-height:16px;color:#f0f0f0">0</div>
<svg class="a" style="left:1873.5px;top:1003px;" width="13" height="13" viewBox="0 0 24 24"><path fill="#4a9cf5" d="M20,2H4A2,2 0 0,0 2,4V22L6,18H20A2,2 0 0,0 22,16V4A2,2 0 0,0 20,2M6,9H18V11H6M14,14H6V12H14M18,8H6V6H18"/></svg>
<div class="tx" style="left:1898px;top:1002px;font-size:13px;line-height:16px;color:#f0f0f0">0</div>
</div></div><div id="hl"></div>
</body></html>
